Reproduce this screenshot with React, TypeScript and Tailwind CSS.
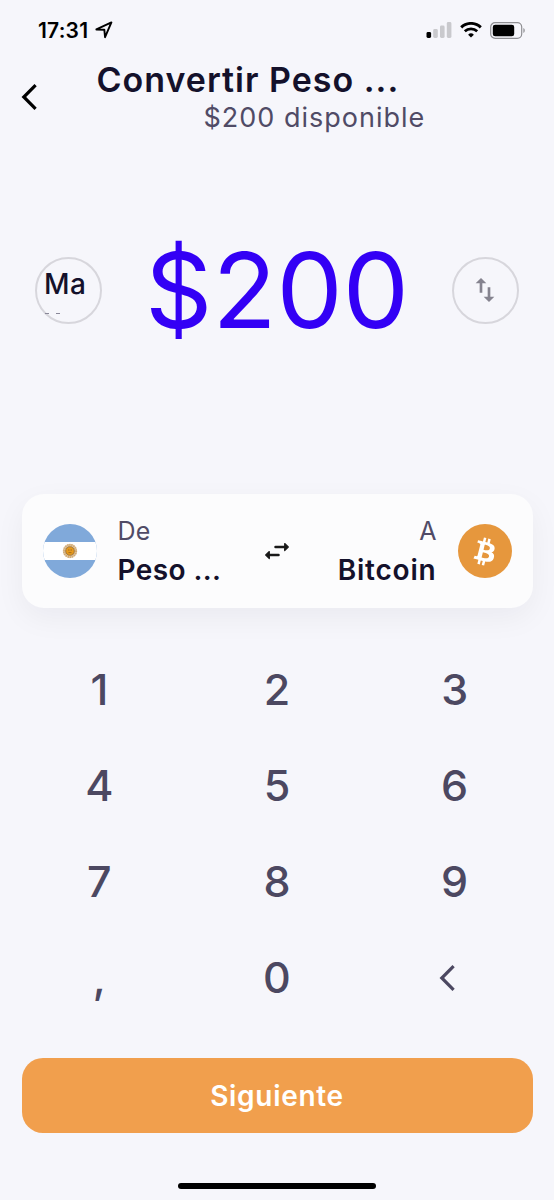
import { useState } from 'react';
import { MdSwapVert } from 'react-icons/md';

// ============================================================================
// Icons
// ============================================================================

function LocationIcon() {
  return (
    <svg width="18" height="18" viewBox="0 0 17 17" fill="none">
      <path d="M1.3 8 15.5 1.4 9.5 15.3 8.8 8.2Z" stroke="#000" strokeWidth="1.8" strokeLinejoin="round" />
    </svg>
  );
}

function SignalIcon() {
  return (
    <svg width="26" height="16" viewBox="0 0 26 16">
      <rect x="0.5" y="10" width="4.6" height="6" rx="1.4" fill="#000" />
      <rect x="7.2" y="7" width="4.6" height="9" rx="1.4" fill="#c9c9cd" />
      <rect x="14" y="3.6" width="4.6" height="12.4" rx="1.4" fill="#c9c9cd" />
      <rect x="20.8" y="0" width="4.6" height="16" rx="1.4" fill="#c9c9cd" />
    </svg>
  );
}

function WifiIcon() {
  return (
    <svg width="22" height="16" viewBox="0 0 22 16" fill="none" stroke="#000">
      <path d="M1.2 5.4A14 14 0 0 1 20.8 5.4" strokeWidth="2.9" />
      <path d="M4.8 9.3A9 9 0 0 1 17.2 9.3" strokeWidth="2.7" />
      <path d="M11 15.6 8.1 12.7A4.2 4.2 0 0 1 13.9 12.7Z" fill="#000" stroke="none" />
    </svg>
  );
}

function BatteryIcon() {
  return (
    <svg width="36" height="17" viewBox="0 0 36 17">
      <rect x="0.7" y="0.7" width="31" height="15.6" rx="4.4" fill="none" stroke="#8f8f93" strokeWidth="1.2" />
      <rect x="2.8" y="2.7" width="21.4" height="11.6" rx="2.4" fill="#000" />
      <path d="M33.4 6v5c1.8-.7 1.8-4.3 0-5z" fill="#8f8f93" />
    </svg>
  );
}

function ChevronLeft({ color }: { color: string }) {
  return (
    <svg width="16" height="26" viewBox="0 0 16 26" fill="none">
      <path d="M14.6 1.2 2.8 13l11.8 11.8" stroke={color} strokeWidth="3.2" />
    </svg>
  );
}

function SwapIcon() {
  return (
    <svg width="24" height="18" viewBox="0 0 24 18" fill="#191919" stroke="#191919" strokeLinecap="round" strokeLinejoin="round">
      <path d="M10.5 5H19M13.5 13H5" strokeWidth="2.5" />
      <path d="M19.7 1.5 23.3 5l-3.6 3.500zM4.3 9.500.7 13l3.600 3.500z" strokeWidth="1.2" />
    </svg>
  );
}

function ArgentinaFlag() {
  return (
    <svg width="54" height="54" viewBox="0 0 54 54">
      <clipPath id="flag">
        <circle cx="27" cy="27" r="27" />
      </clipPath>
      <g clipPath="url(#flag)">
        <rect width="54" height="54" fill="#80a9da" />
        <rect y="18" width="54" height="18" fill="#fff" />
        <circle cx="27" cy="27" r="5.8" fill="none" stroke="#e0c6a0" strokeWidth="2.8" />
        <circle cx="27" cy="27" r="5.8" fill="none" stroke="#cfa873" strokeWidth="2.6" strokeDasharray="1 1" />
        <circle cx="27" cy="27" r="4.3" fill="#e79a1c" stroke="#96692f" strokeWidth="0.8" />
        <path d="M25 26h1.5M27.5 26H29M25.5 28.6h3" stroke="#8a5a1c" strokeWidth="0.7" />
      </g>
    </svg>
  );
}

function BitcoinIcon() {
  return (
    <div className="flex h-[54px] w-[54px] items-center justify-center rounded-full bg-[#e6973d]">
      <svg width="45" height="45" viewBox="0 0 32 32" fill="#fff">
        <path d="M23.189 14.02c.314-2.096-1.283-3.223-3.465-3.975l.708-2.84-1.728-.43-.69 2.765c-.454-.114-.92-.22-1.385-.326l.695-2.783L15.596 6l-.708 2.839c-.376-.086-.746-.17-1.104-.26l.002-.009-2.384-.595-.46 1.846s1.283.294 1.256.312c.7.175.826.638.805 1.006l-.806 3.235c.048.012.11.03.18.057l-.183-.045-1.13 4.532c-.086.212-.303.531-.793.41.018.025-1.256-.313-1.256-.313l-.858 1.978 2.25.561c.418.105.828.215 1.231.318l-.715 2.872 1.727.43.708-2.84c.472.127.93.245 1.378.357l-.706 2.828 1.728.43.715-2.866c2.948.558 5.164.333 6.097-2.333.752-2.146-.037-3.385-1.588-4.192 1.13-.26 1.98-1.003 2.207-2.538zm-3.95 5.538c-.533 2.147-4.148.986-5.32.695l.95-3.805c1.172.293 4.929.872 4.37 3.11zm.535-5.569c-.487 1.953-3.495.96-4.47.717l.86-3.45c.975.243 4.118.696 3.61 2.733z" />
      </svg>
    </div>
  );
}

// ============================================================================
// Sections
// ============================================================================

function StatusBar() {
  return (
    <div className="flex h-[60px] items-center justify-between pl-[38px] pr-[28px]">
      <div className="flex items-center gap-[7px]">
        <span className="text-[21px] font-semibold leading-none tracking-[0.2px] text-black">17:31</span>
        <LocationIcon />
      </div>
      <div className="flex items-center gap-[8px]">
        <SignalIcon />
        <WifiIcon />
        <BatteryIcon />
      </div>
    </div>
  );
}

function Header() {
  return (
    <header className="flex h-[75px] items-start">
      <button className="ml-[21px] mt-[24px]" aria-label="Volver">
        <ChevronLeft color="#000" />
      </button>
      <div className="ml-[59.5px]">
        <h1 className="text-[34px] font-semibold leading-[40px] tracking-[1px] text-[#14112b]">Convertir Peso ...</h1>
        <p className="ml-[107px] text-[27px] leading-[35px] tracking-[1px] text-[#504b66]">$200 disponible</p>
      </div>
    </header>
  );
}

function AmountRow({ amount }: { amount: string }) {
  return (
    <section className="flex h-[310px] items-center justify-between px-[35px]">
      <button className="h-[67px] w-[67px] rounded-full border-[2.5px] border-[#d7d6dc] pl-[7px] text-left">
        <span className="block text-[28px] font-medium leading-[35px] tracking-[0.4px] text-[#14112b]">Ma</span>
        <span className="mt-[11px] flex gap-[7px] pl-px">
          <i className="h-px w-[4px] bg-[#8a8899]" />
          <i className="h-px w-[4px] bg-[#8a8899]" />
        </span>
      </button>
      <span className="-mt-[2px] text-[105px] leading-none text-[#3300f5]">{amount}</span>
      <button
        className="flex h-[67px] w-[67px] items-center justify-center rounded-full border-[2.5px] border-[#d7d6dc]"
        aria-label="Cambiar moneda"
      >
        <MdSwapVert size={32} color="#85838f" />
      </button>
    </section>
  );
}

function PairCard() {
  return (
    <section className="mx-[21.5px] mt-[49px] flex h-[114px] items-center rounded-[22px] bg-[#fcfcfd] px-[21px] shadow-[0_10px_30px_rgba(20,17,43,0.05)]">
      <ArgentinaFlag />
      <div className="ml-[21px] w-[147px]">
        <p className="text-[25px] leading-[39px] tracking-[0.2px] text-[#504b66]">De</p>
        <p className="text-[28px] font-semibold leading-[39px] tracking-[0.4px] text-[#14112b]">Peso ...</p>
      </div>
      <SwapIcon />
      <div className="mr-[21px] flex-1 text-right">
        <p className="text-[25px] leading-[39px] text-[#504b66]">A</p>
        <p className="text-[28px] font-semibold leading-[39px] tracking-[0.8px] text-[#14112b]">Bitcoin</p>
      </div>
      <BitcoinIcon />
    </section>
  );
}

const KEYS = ['1', '2', '3', '4', '5', '6', '7', '8', '9', ',', '0', '<'];

function Keypad({ onPress }: { onPress: (key: string) => void }) {
  return (
    <div className="mt-[33px] grid h-[385px] grid-cols-3 grid-rows-4 px-[10.5px]">
      {KEYS.map(key => (
        <button
          key={key}
          onClick={() => onPress(key)}
          className="flex items-center justify-center text-[43px] font-medium leading-none text-[#4c4861]"
        >
          {key === '<' ? (
            <span className="-ml-[16px]">
              <ChevronLeft color="#4c4861" />
            </span>
          ) : (
            key
          )}
        </button>
      ))}
    </div>
  );
}

// ============================================================================
// Screen
// ============================================================================

export default function App() {
  const [amount, setAmount] = useState('200');

  const handlePress = (key: string) => {
    if (key === '<') {
      setAmount(prev => prev.slice(0, -1) || '0');
      return;
    }
    if (key === ',' && amount.includes(',')) return;
    setAmount(prev => (prev === '0' && key !== ',' ? key : prev + key));
  };

  return (
    <main className="flex h-[1200px] w-[554px] flex-col overflow-hidden bg-[#f6f6fb] font-['Inter',sans-serif]">
      <StatusBar />
      <Header />
      <AmountRow amount={`$${amount}`} />
      <PairCard />
      <Keypad onPress={handlePress} />
      <button className="mx-[21.5px] mt-[32px] h-[75px] shrink-0 rounded-[21px] bg-[#f19f4d] text-[28px] font-semibold tracking-[0.7px] text-white">
        Siguiente
      </button>
      <div className="mx-auto mt-[49.5px] h-[6.5px] w-[198px] shrink-0 rounded-full bg-black" />
    </main>
  );
}
